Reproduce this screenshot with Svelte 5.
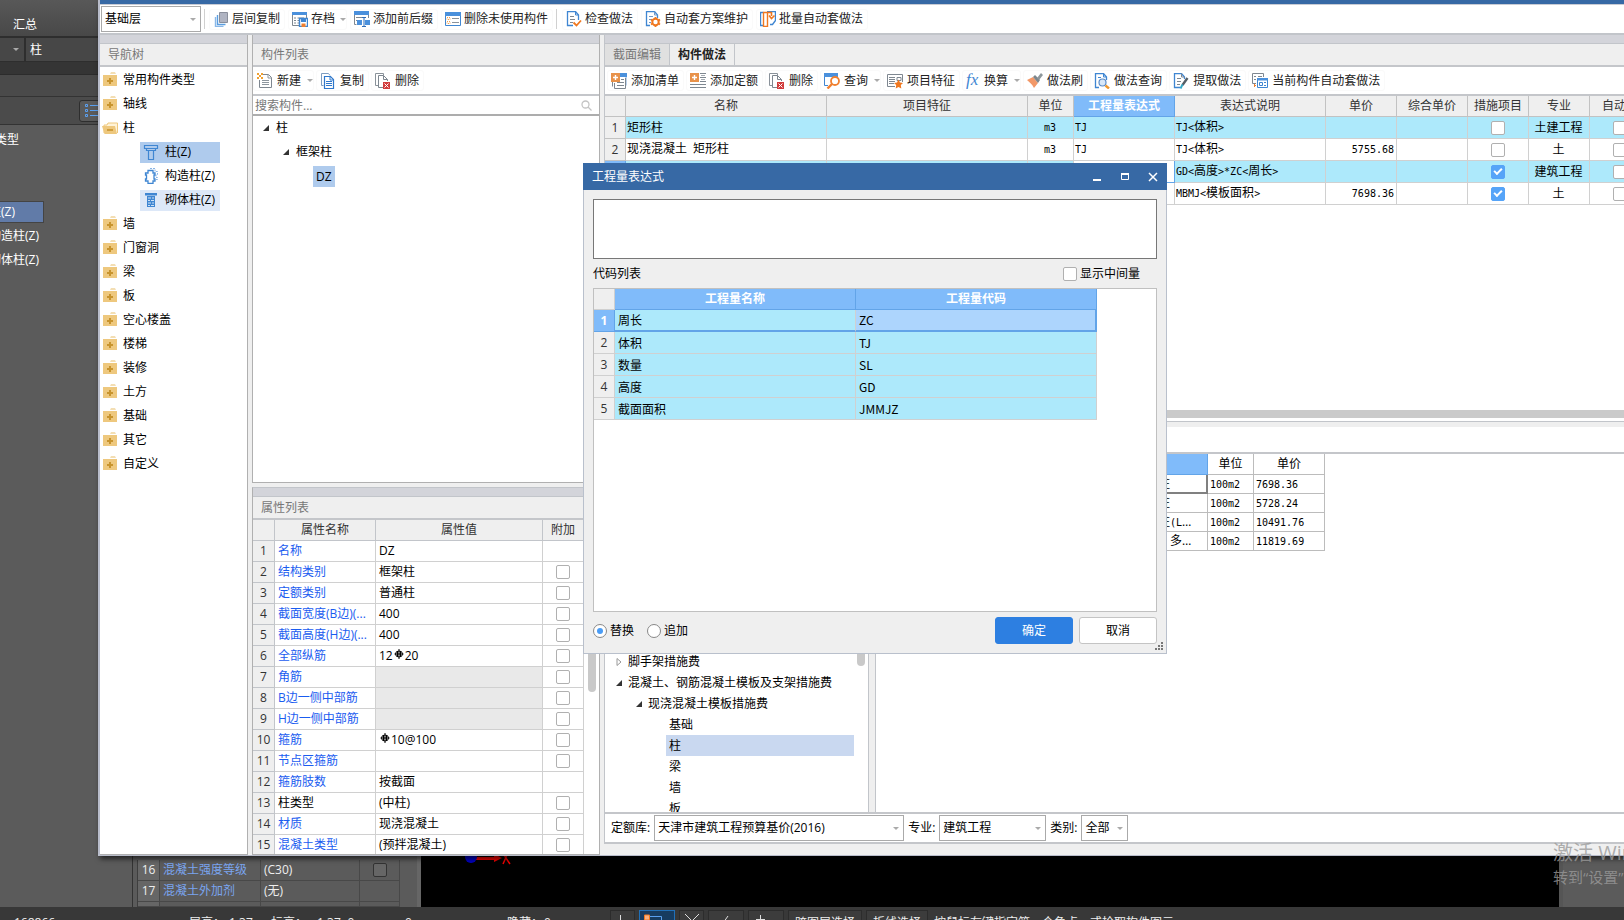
<script lang="ts">
	type Tool = { icon: string; label: string; menu?: boolean; sep?: boolean };

	const mainTools: Tool[] = [
		{ icon: 'layers', label: '层间复制' },
		{ icon: 'archive', label: '存档', menu: true },
		{ icon: 'affix', label: '添加前后缀' },
		{ icon: 'unused', label: '删除未使用构件', sep: true },
		{ icon: 'check', label: '检查做法' },
		{ icon: 'gear', label: '自动套方案维护' },
		{ icon: 'batch', label: '批量自动套做法' },
	];

	const listTools: Tool[] = [
		{ icon: 'new', label: '新建', menu: true },
		{ icon: 'copy', label: '复制' },
		{ icon: 'delete', label: '删除' },
	];

	const methodTools: Tool[] = [
		{ icon: 'addlist', label: '添加清单' },
		{ icon: 'addquota', label: '添加定额' },
		{ icon: 'delete', label: '删除' },
		{ icon: 'query', label: '查询', menu: true },
		{ icon: 'feature', label: '项目特征' },
		{ icon: 'fx', label: '换算', menu: true },
		{ icon: 'brush', label: '做法刷' },
		{ icon: 'search', label: '做法查询' },
		{ icon: 'extract', label: '提取做法' },
		{ icon: 'auto', label: '当前构件自动套做法' },
	];

	const columnTypes = [
		{ icon: 'column', label: '柱(Z)', state: 'selected' },
		{ icon: 'tie', label: '构造柱(Z)', state: '' },
		{ icon: 'masonry', label: '砌体柱(Z)', state: 'hover' },
	];
	const navTop = ['常用构件类型', '轴线'];
	const navRest = ['墙', '门窗洞', '梁', '板', '空心楼盖', '楼梯', '装修', '土方', '基础', '其它', '自定义'];

	const props = [
		{ name: '名称', value: 'DZ', box: false },
		{ name: '结构类别', value: '框架柱' },
		{ name: '定额类别', value: '普通柱' },
		{ name: '截面宽度(B边)(...', value: '400' },
		{ name: '截面高度(H边)(...', value: '400' },
		{ name: '全部纵筋', value: '12', bar: '20' },
		{ name: '角筋', value: '', off: true },
		{ name: 'B边一侧中部筋', value: '', off: true },
		{ name: 'H边一侧中部筋', value: '', off: true },
		{ name: '箍筋', value: '', bar: '10@100' },
		{ name: '节点区箍筋', value: '' },
		{ name: '箍筋肢数', value: '按截面', box: false },
		{ name: '柱类型', value: '(中柱)', plain: true },
		{ name: '材质', value: '现浇混凝土' },
		{ name: '混凝土类型', value: '(预拌混凝土)' },
	];

	const methodHead = ['名称', '项目特征', '单位', '工程量表达式', '表达式说明', '单价', '综合单价', '措施项目', '专业', '自动套'];
	const methodWidths = [201, 201, 46, 101, 151, 71, 71, 61, 61, 61];
	const methodRows = [
		{ no: '1', name: '矩形柱', unit: 'm3', expr: 'TJ', note: 'TJ<体积>', price: '', measure: false, major: '土建工程' },
		{ no: '2', name: '现浇混凝土 矩形柱', unit: 'm3', expr: 'TJ', note: 'TJ<体积>', price: '5755.68', measure: false, major: '土' },
		{ no: '', name: '', unit: '', expr: '', note: 'GD<高度>*ZC<周长>', price: '', measure: true, major: '建筑工程', current: true },
		{ no: '', name: '', unit: '', expr: '', note: 'MBMJ<模板面积>', price: '7698.36', measure: true, major: '土' },
	];

	const quotaRows = [
		{ name: '柱', price: '7698.36' },
		{ name: '柱', price: '5728.24' },
		{ name: '柱(L…', price: '10491.76' },
		{ name: '  多…', price: '11819.69' },
	];

	const quotaTree = [
		{ label: '脚手架措施费', level: 0, arrow: 'closed' },
		{ label: '混凝土、钢筋混凝土模板及支架措施费', level: 0, arrow: 'open' },
		{ label: '现浇混凝土模板措施费', level: 1, arrow: 'open' },
		{ label: '基础', level: 2 },
		{ label: '柱', level: 2, selected: true },
		{ label: '梁', level: 2 },
		{ label: '墙', level: 2 },
		{ label: '板', level: 2 },
	];

	const codes = [
		['周长', 'ZC'],
		['体积', 'TJ'],
		['数量', 'SL'],
		['高度', 'GD'],
		['截面面积', 'JMMJZ'],
	];

	let mode = $state('replace');
	let expression = $state('');
	let showMiddle = $state(false);

	/** Split into half-width and full-width runs so that each gets its own font. */
	function runs(text: string) {
		return (text.match(/[\x20-\x7e]+|[^\x20-\x7e]+/g) ?? []).map((t) => ({
			text: t,
			half: t.charCodeAt(0) < 128,
		}));
	}
</script>

{#snippet icon(name: string)}
	<svg class="icon" class:narrow={name === 'fx'} viewBox={name === 'fx' ? '0 0 14 16' : '0 0 16 16'} fill="none" aria-hidden="true">
		{#if name === 'layers'}
			<path d="M2.5 6v9.5h8" stroke="#8ab8e8" stroke-width="1.4" /><path d="M4.5 4v9.5h8" stroke="#5b9ee0" stroke-width="1.4" />
			<path d="M6.500 1.500h8v10h-8z" fill="#b0b4c2" stroke="#8a8f9c" />
		{:else if name === 'archive'}
			<path d="M0 1h15v3H0z" fill="#4a90dc" /><path d="M.5 4v10.5h7M14.5 4v3" stroke="#7e8790" />
			<path d="M2 7h2M2 9.5h2M2 12h2M5.5 7H12M5.5 9.5H7M5.5 12H7" stroke="#7e8790" />
			<path d="M7.5 7.5h8v8h-8z" fill="#fff" stroke="#3f86d2" stroke-width="1.4" /><path d="M9 8h5v3H9z" fill="#3f86d2" /><path d="M9.5 12.5h4V16h-4z" fill="#f08030" />
		{:else if name === 'affix'}
			<path d="M0 0h15v4H0z" fill="#4a90dc" /><path d="M.5 4v9.5h2M14.5 4v3" stroke="#7e8790" /><path d="M2 6.5h6M2 9.5h1" stroke="#7e8790" />
			<path d="M3 9h5v5H3zM11 9h5v5h-5z" fill="#4a90dc" /><path d="M8 6.5h4M8 15.5h4M10 6.5v9" stroke="#2d6cb8" />
		{:else if name === 'unused'}
			<path d="M.5 1.5h15v13H.5z" stroke="#3f86d2" /><path d="M0 1h16v4H0z" fill="#4a90dc" />
			<path d="M2 6.5h3v2H2zM2 10.5h3v2H2z" stroke="#f0a050" stroke-dasharray="1 1" /><path d="M7 7.5h7M7 11.5h7" stroke="#8a929a" />
		{:else if name === 'check'}
			<path d="M7 14.5H1.5V.5h8l3 3.5v5" stroke="#3f86d2" stroke-width="1.3" /><path d="M9.5.5V4h3" stroke="#3f86d2" /><path d="M4 5.5h4M4 8.5h5M4 11.5h3" stroke="#7e8790" />
			<path d="M7.5 11.5l3 3 4.5-5" stroke="#f07820" stroke-width="1.8" />
		{:else if name === 'gear'}
			<path d="M5 14.5H1.5V.5h8l3 3.5v3" stroke="#3f86d2" stroke-width="1.3" /><path d="M9.5.5V4h3M4 5.5h4M4 8.5h3M4 11.5h2" stroke="#6f98c8" />
			<circle cx="10.5" cy="11" r="3.2" stroke="#f07820" stroke-width="2" /><path d="M10.500 6v2M10.500 14v2M6 8.500l1.500 1M13.500 12.500l1.500 1M6 13.500l1.500-1M13.500 9.500l1.500-1" stroke="#f07820" stroke-width="1.8" />
		{:else if name === 'batch'}
			<path d="M3.5 14.5h-3v-13h3M7 .5h8.5v9l-3 4H10" stroke="#3f86d2" stroke-width="1.4" /><path d="M3.5 1.5h4v14h-4z" fill="#fff" stroke="#f07820" stroke-width="1.4" />
			<path d="M7 1.500h4.500V5M9 4.500l2.500 3 3-3" stroke="#f07820" stroke-width="1.6" />
		{:else if name === 'new'}
			<path d="M6 1.5h5.5l3 3v10h-12V7" stroke="#7e8790" /><path d="M11 1.5V5h3.5M5 7.5h7M5 9.5h7M5 11.5h7" stroke="#8d969e" />
			<path d="M0 0h2v2H0zM4 0h2v2H4zM2 2h2v2H2zM0 4h2v2H0zM4 4h2v2H4z" fill="#f0a030" />
		{:else if name === 'copy'}
			<path d="M3.5 12.5h-2V.5h7l1.5 2" stroke="#7e9dc0" /><path d="M4.5 3.5h6l3 3v9h-9z" fill="#fff" stroke="#2f78cc" stroke-width="1.2" /><path d="M10 3.5V7h3M6 8.5h6M6 10.5h6M6 12.5h6" stroke="#2f78cc" />
		{:else if name === 'delete'}
			<path d="M3 12.5H.5V.5h8v2" stroke="#8a929a" /><path d="M8 14.5H3.5v-12h5l4 4V8" fill="#fff" stroke="#7e8790" /><path d="M8.5 2.5v4h4" stroke="#7e8790" />
			<path d="M8 9h7v7H8z" fill="#d23c3c" /><path d="M9.5 10.5l4 4M13.5 10.5l-4 4" stroke="#fff" />
		{:else if name === 'addlist'}
			<path d="M9 1.5h6v11" stroke="#7aa8de" /><path d="M8 0h8v4H8z" fill="#4a90dc" /><path d="M3.5 10v5.5h11V5M1.5 9v4.5" stroke="#7e8790" /><path d="M10 6.5h3M6 9.5h7M6 12.5h7" stroke="#7e8790" />
			<path d="M0 0h9v9H0z" fill="#e8924a" /><path d="M4.5 2v5M2 4.5h5" stroke="#fff" stroke-width="1.4" />
		{:else if name === 'addquota'}
			<path d="M10 .5h6M10 4.5h6M10 8.5h6M0 11.5h16M0 14.5h16" stroke="#7e8790" /><path d="M11 2.5h4M11 6.5h4" stroke="#a4abb2" />
			<path d="M0 0h9v9H0z" fill="#e8924a" /><path d="M4.5 2v5M2 4.5h5" stroke="#fff" stroke-width="1.4" />
		{:else if name === 'query'}
			<path d="M.5 3v9.5H4" stroke="#3f86d2" /><path d="M0 0h14v4H0z" fill="#4a90dc" /><circle cx="11" cy="8" r="4" fill="#fff" stroke="#f08030" stroke-width="1.8" /><path d="M8 11l-4.5 4.5" stroke="#f08030" stroke-width="2.4" />
		{:else if name === 'feature'}
			<path d="M8 13.5H.5v-12h15V9" stroke="#7e8790" /><path d="M2 4.5h6M2 6.5h6M2 8.5h6M2 10.5h5M10 4.5h4v3h-4z" stroke="#7e8790" />
			<path d="M11.5 6.5l1.500 3 3 .4-2.200 2.100.5 3.500-2.800-1.600L8.700 15.500l.5-3.500L7 9.900l3-.4z" fill="#f07820" />
		{:else if name === 'fx'}
			<text x="0" y="12" font-family="Liberation Serif, serif" font-style="italic" font-size="17" fill="#3f86d2">fx</text>
		{:else if name === 'brush'}
			<path d="M0 7l6-3 5 6-4 5C5 11 2 9 0 7z" fill="#f29868" /><path d="M6 4l2-2 5 5-2 3z" fill="#7d868c" /><path d="M10 5l4-5 2 2-4 5z" fill="#8e979c" />
		{:else if name === 'search'}
			<path d="M5 14.5H1.5V.5h8l3 3.5v3" stroke="#3f86d2" stroke-width="1.3" /><path d="M9.5.5V4h3M4 4.5h3" stroke="#3f86d2" /><circle cx="8.5" cy="9.5" r="3.5" fill="#d8e8f8" stroke="#5b8cc8" stroke-width="1.2" /><path d="M11.5 12.5L15 15.5" stroke="#f0982c" stroke-width="2.4" />
		{:else if name === 'extract'}
			<path d="M7 14.5H1.5V.5h7l3 3.5v2" stroke="#3f86d2" stroke-width="1.3" /><path d="M8.5.5V4h3M4 5.5h4M4 8.5h4M4 11.5h3" stroke="#7e8790" /><path d="M14.5 5l-5 7" stroke="#555e66" stroke-width="2.4" /><path d="M9.5 11.5l-2 4" stroke="#32a8c8" stroke-width="2" />
		{:else if name === 'auto'}
			<path d="M4 10.5H.5V.5h11V4" stroke="#7e8790" /><path d="M2 3.5h2M6 3.5h4M2 6.5h2" stroke="#7e8790" /><path d="M2 12.5h2M2.5 11v3" stroke="#f08030" /><path d="M5.5 5.5h10v9h-10z" fill="#fff" stroke="#3f86d2" /><path d="M5 5h11v2.5H5z" fill="#4a90dc" /><path d="M7.500 9.500h3v3h-3zM12 9.500h2M12 12.500h2" stroke="#3f86d2" />
		{:else if name === 'folder'}
			<path d="M8 1.500l1-1h4l1 1z" fill="#e8bd68" /><path d="M1 3h14v11H1z" fill="#eec87e" /><path d="M8 6v6M5 9h6" stroke="#c8942e" stroke-width="2" />
		{:else if name === 'opened'}
			<path d="M2 13V5h3l1-2h9.500v10" fill="#fff3d8" stroke="#eec87e" /><path d="M0 6h13l2 8H2.500z" fill="#eec87e" /><path d="M5 10h6" stroke="#c8942e" stroke-width="1.6" />
		{:else if name === 'column'}
			<path d="M1.5 1.5h13v3h-13zM3.5 4.5h9v2h-9zM5.5 6.5h5v9h-5z" stroke="#3f86d2" stroke-width="1.2" />
		{:else if name === 'tie'}
			<path d="M7 .5h5v3h2.5v3H13v3h1.500v2H12" stroke="#8ab4e4" stroke-dasharray="2 1" />
			<path d="M5 2.500h5v2.500h2v2h-1v4h1v2h-2v2.500H5V13H2.500v-2h1V7h-1V5H5z" fill="#fff" stroke="#3f86d2" stroke-width="1.3" />
		{:else if name === 'masonry'}
			<path d="M2 1h12v2.5H2z" fill="#3f86d2" /><path d="M4 4h8v11H4z" fill="#3f86d2" /><path d="M5 6h3M9 6h2M5 8.5h2M8 8.5h3M5 11h3M9 11h2M5 13.5h2M8 13.5h3" stroke="#cfe2f6" />
		{/if}
	</svg>
{/snippet}

{#snippet toolbar(tools: Tool[], roomy: boolean)}
	{#each tools as tool}
		<button type="button" class="tool" class:roomy class:menu={tool.menu}>
			{@render icon(tool.icon)}
			<span>{tool.label}</span>
			{#if tool.menu}<i class="caret"></i>{/if}
		</button>
		{#if tool.sep}<i class="sep"></i>{/if}
	{/each}
{/snippet}

{#snippet song(text: string)}{#each runs(text) as run}<span class:half={run.half}>{run.text}</span>{/each}{/snippet}

{#snippet arrow(kind: string)}
	<svg class="arrow" viewBox="0 0 8 8" aria-hidden="true">
		{#if kind === 'open'}
			<path d="M7 1v6H1z" fill="#333" />
		{:else}
			<path d="M2 .5l4 3.5-4 3.5z" fill="#fff" stroke="#999" />
		{/if}
	</svg>
{/snippet}

<div class="desktop">
	<div class="host">
		<aside class="host-left">
			<div class="ribbon">汇总</div>
			<div class="host-pick"><span class="pick-arrow"><i class="caret"></i></span><span class="pick-text">柱</span></div>
			<div class="host-band"></div>
			<div class="host-title"></div>
			<div class="host-tools">
				<button type="button" class="list-button" aria-label="类型">
					<svg width="14" height="14" viewBox="0 0 14 14" fill="none" stroke="#5aa0f0"><path d="M.5.5h2v2h-2zM.5 5.5h2v2h-2zM.5 10.5h2v2h-2zM5 1.5h9M5 6.5h9M5 11.5h9" /></svg>
				</button>
			</div>
			<div class="host-tree">
				<p class="group">类型</p>
				<ul>
					<li class="active">柱(Z)</li>
					<li>构造柱(Z)</li>
					<li>砌体柱(Z)</li>
				</ul>
			</div>
		</aside>
		<section class="host-props">
			<table>
				<tbody>
					<tr><th>16</th><td class="key">混凝土强度等级</td><td class="val">(C30)</td><td class="flag"><input type="checkbox" class="dark" aria-label="混凝土强度等级" /></td></tr>
					<tr><th>17</th><td class="key">混凝土外加剂</td><td class="val">(无)</td><td class="flag"></td></tr>
					<tr class="stub"><th></th><td></td><td></td><td></td></tr>
				</tbody>
			</table>
		</section>
		<section class="canvas">
			<svg class="gizmo" width="44" height="18" viewBox="0 0 44 18" aria-hidden="true">
				<path d="M10 8h20v-3l8 4-8 4v-2H10z" fill="#e00" /><circle cx="7" cy="8" r="6" fill="#0000c0" />
				<path d="M39 15l4-9M40 6l6 9" stroke="#e00" stroke-width="1.5" />
			</svg>
		</section>
		<aside class="host-right"></aside>
	</div>
	<footer class="status">
		<span class="s-id">168866</span>
		<span class="s-item">层高：</span><span class="s-num">1.37</span>
		<span class="s-item">标高：</span><span class="s-range">1.37~0</span>
		<span class="s-count">0</span>
		<span class="s-item hidden-count">隐藏：</span><span class="s-zero">0</span>
		<button type="button" class="s-btn" aria-label="正交"><svg width="14" height="14" stroke="#ddd" fill="none"><path d="M4.5 1v10h8" /></svg></button>
		<button type="button" class="s-btn wide on" aria-label="捕捉"><svg width="28" height="14" fill="none"><path d="M5.5 2.5h13v10h-13z" stroke="#5aa0f0" /><path d="M1.5 1h5v5h-5z" fill="#f8b080" stroke="#f07820" /></svg></button>
		<button type="button" class="s-btn" aria-label="交点"><svg width="16" height="14" stroke="#ddd" fill="none"><path d="M1 0l14 14M15 0L1 14" /></svg></button>
		<button type="button" class="s-btn wide" aria-label="垂点"><svg width="14" height="14" stroke="#ddd" fill="none"><path d="M9 2L2 12" /></svg></button>
		<button type="button" class="s-btn wide" aria-label="中点"><svg width="28" height="14" stroke="#ddd" fill="none"><path d="M8.5 1v12M4 5.5h9" /></svg></button>
		<button type="button" class="s-btn text">跨图层选择</button>
		<button type="button" class="s-btn text">折线选择</button>
		<span class="s-tip">按鼠标左键指定第一个角点，或拾取构件图元</span>
	</footer>

	<main class="window">
		<div class="title-edge"></div>
		<nav class="main-bar">
			<label class="pick floor"><select aria-label="基础层"><option>基础层</option></select></label>
			<i class="sep"></i>
			{@render toolbar(mainTools, false)}
		</nav>

		<div class="docks">
			<section class="dock nav-dock">
				<div class="grip"></div>
				<h2>导航树</h2>
				<ul class="nav-tree">
					{#each navTop as label}
						<li>{@render icon('folder')}<span>{label}</span></li>
					{/each}
					<li>{@render icon('opened')}<span>柱</span></li>
					{#each columnTypes as type}
						<li class="child"><span class="chip {type.state}">{@render icon(type.icon)}<span>{type.label}</span></span></li>
					{/each}
					{#each navRest as label}
						<li>{@render icon('folder')}<span>{label}</span></li>
					{/each}
				</ul>
			</section>

			<div class="middle">
				<section class="dock list-dock">
					<div class="grip"></div>
					<h2>构件列表</h2>
					<div class="bar">{@render toolbar(listTools, true)}</div>
					<label class="search">
						<input type="text" placeholder="搜索构件..." aria-label="搜索构件" />
						<svg width="11" height="11" viewBox="0 0 11 11" fill="none" stroke="#c4c4c4" stroke-width="1.3"><circle cx="4.5" cy="4.5" r="3.5" /><path d="M7 7l3.5 3.5" /></svg>
					</label>
					<ul class="part-tree">
						<li>{@render arrow('open')}<span>柱</span></li>
						<li class="lv1">{@render arrow('open')}<span>框架柱</span></li>
						<li class="lv2"><span class="picked">DZ</span></li>
					</ul>
				</section>

				<section class="dock prop-dock">
					<div class="grip"></div>
					<h2>属性列表</h2>
					<div class="prop-body">
						<table class="prop-table">
							<thead>
								<tr><th class="no"></th><th class="name">属性名称</th><th>属性值</th><th class="extra">附加</th></tr>
							</thead>
							<tbody>
								{#each props as row, i}
									<tr>
										<th class="no">{i + 1}</th>
										<td class:link={!row.plain}>{row.name}</td>
										<td class:off={row.off}>{row.value}{#if row.bar}<svg class="rebar" viewBox="0 0 10 11" fill="none" stroke="#000"><ellipse cx="5" cy="5" rx="3.5" ry="3" /><path d="M3.5 2v6M6.5 2v6M5 0v10M.5 5h9" /></svg>{row.bar}{/if}</td>
										<td class="center">{#if row.box !== false}<input type="checkbox" aria-label={row.name} />{/if}</td>
									</tr>
								{/each}
							</tbody>
						</table>
						<div class="gutter"><i class="thumb"></i></div>
					</div>
				</section>
			</div>

			<div class="work">
				<div class="grip"></div>
				<div class="tabs" role="tablist">
					<button type="button" role="tab" aria-selected="false">截面编辑</button>
					<button type="button" role="tab" aria-selected="true" class="current">构件做法</button>
				</div>
				<div class="bar">{@render toolbar(methodTools, true)}</div>
				<div class="method-area">
					<table class="method">
						<colgroup>
							<col style:width="21px" />
							{#each methodWidths as w}<col style:width="{w}px" />{/each}
						</colgroup>
						<thead>
							<tr>
								<th></th>
								{#each methodHead as head}<th class:current={head === '工程量表达式'}>{head}</th>{/each}
							</tr>
						</thead>
						<tbody>
							{#each methodRows as row, i}
								<tr class:tinted={i % 2 === 0}>
									<th class:current={row.current}>{row.no}</th>
									<td>{@render song(row.name)}</td>
									<td></td>
									<td class="center">{@render song(row.unit)}</td>
									<td class:editing={row.current}>{@render song(row.expr)}</td>
									<td>{@render song(row.note)}</td>
									<td class="right">{@render song(row.price)}</td>
									<td></td>
									<td class="center"><input type="checkbox" checked={row.measure} aria-label="措施项目" /></td>
									<td class="center">{row.major}</td>
									<td class="center"><input type="checkbox" aria-label="自动套" /></td>
								</tr>
							{/each}
						</tbody>
					</table>
					<div class="hscroll"></div>
				</div>

				<div class="query">
					<div class="query-tabs"></div>
					<div class="query-body">
						<ul class="quota-tree">
							{#each quotaTree as node}
								<li class="q{node.level}">
									{#if node.arrow}{@render arrow(node.arrow)}{/if}
									<span class="label" class:selected={node.selected}>{node.label}</span>
								</li>
							{/each}
							<li class="track" aria-hidden="true"></li>
						</ul>
						<div class="quota-area">
							<table class="quota">
								<thead>
									<tr><th class="lead current"></th><th class="title current"></th><th class="unit">单位</th><th class="price">单价</th></tr>
								</thead>
								<tbody>
									{#each quotaRows as row, i}
										<tr><td></td><td class="title" class:focus={i === 0}>{@render song(row.name)}</td><td>{@render song('100m2')}</td><td>{@render song(row.price)}</td></tr>
									{/each}
								</tbody>
							</table>
						</div>
					</div>
					<div class="filters">
						<label for="lib">定额库:</label><span class="pick lib"><select id="lib"><option>天津市建筑工程预算基价(2016)</option></select></span>
						<label for="major">专业:</label><span class="pick major"><select id="major"><option>建筑工程</option></select></span>
						<label for="kind">类别:</label><span class="pick kind"><select id="kind"><option>全部</option></select></span>
					</div>
				</div>
			</div>
		</div>
	</main>

	<div class="dialog" role="dialog" aria-labelledby="dialog-title">
		<header>
			<h1 id="dialog-title">工程量表达式</h1>
			<button type="button" aria-label="最小化"><svg width="10" height="10"><path d="M1 7h8v2H1z" fill="#fff" /></svg></button>
			<button type="button" aria-label="最大化"><svg width="10" height="10" fill="none" stroke="#fff"><path d="M1.5 2.5h7v5h-7z" /><path d="M1 2h8" stroke-width="2" /></svg></button>
			<button type="button" aria-label="关闭"><svg width="10" height="10" fill="none" stroke="#fff" stroke-width="1.5"><path d="M1 1l8 8M9 1L1 9" /></svg></button>
		</header>
		<div class="dialog-body">
			<textarea bind:value={expression} aria-labelledby="dialog-title"></textarea>
			<div class="caption">
				<span>代码列表</span>
				<label><input type="checkbox" bind:checked={showMiddle} />显示中间量</label>
			</div>
			<div class="code-box">
				<table class="codes">
					<thead><tr><th class="corner"></th><th>工程量名称</th><th>工程量代码</th></tr></thead>
					<tbody>
						{#each codes as [name, code], i}
							<tr class:active={i === 0}><th>{i + 1}</th><td>{name}</td><td>{code}</td></tr>
						{/each}
					</tbody>
				</table>
			</div>
			<div class="actions">
				<label><input type="radio" name="mode" value="replace" bind:group={mode} />替换</label>
				<label><input type="radio" name="mode" value="append" bind:group={mode} />追加</label>
				<span class="fill"></span>
				<button type="button" class="primary">确定</button>
				<button type="button">取消</button>
			</div>
		</div>
		<svg class="resize" width="9" height="9" fill="#777" aria-hidden="true"><path d="M6 0h2v2H6zM3 3h2v2H3zM6 3h2v2H6zM0 6h2v2H0zM3 6h2v2H3zM6 6h2v2H6z" /></svg>
	</div>

	<div class="watermark"><p>激活 Win</p><p class="small">转到“设置”</p></div>
</div>

<style>
	:global(body) {
		margin: 0;
		overflow: hidden;
	}

	.desktop {
		position: relative;
		display: flex;
		flex-direction: column;
		height: 100vh;
		overflow: hidden;
		background: #363636;
		color: #000;
		font: 12px/16px 'Open Sans', 'Noto Sans CJK SC', sans-serif;
	}

	.desktop *,
	.desktop *::before,
	.desktop *::after {
		box-sizing: border-box;
	}

	ul,
	p,
	h1,
	h2 {
		margin: 0;
		padding: 0;
		list-style: none;
		font-size: 12px;
		font-weight: normal;
	}

	button,
	input,
	select,
	textarea {
		margin: 0;
		font: inherit;
		color: inherit;
	}

	table {
		border-spacing: 0;
		table-layout: fixed;
	}

	th,
	td {
		padding: 0;
		font-weight: normal;
		text-align: left;
		white-space: nowrap;
		overflow: hidden;
	}

	/* ---- form controls ---- */
	input[type='checkbox'],
	input[type='radio'] {
		appearance: none;
		display: block;
		flex: none;
		width: 14px;
		height: 14px;
		border: 1px solid #b0b0b0;
		border-radius: 2px;
		background: #fff;
	}

	input[type='checkbox']:checked {
		border-color: #56a4f8;
		background: #56a4f8;
	}

	input[type='checkbox']:checked::after {
		content: '';
		display: block;
		width: 8px;
		height: 5px;
		margin: 2px;
		border: solid #fff;
		border-width: 0 0 2px 2px;
		transform: rotate(-45deg);
	}

	input[type='radio'] {
		border-color: #888;
		border-radius: 50%;
	}

	input[type='radio']:checked::after {
		content: '';
		display: block;
		width: 6px;
		height: 6px;
		margin: 3px;
		border-radius: 50%;
		background: #4a9cf5;
	}

	input[type='checkbox'].dark {
		background: #666;
		border-color: #333;
	}

	.pick {
		position: relative;
		display: block;
		height: 26px;
	}

	.pick select {
		appearance: none;
		display: block;
		width: 100%;
		height: 100%;
		padding: 0 3px;
		border: 1px solid #aaa;
		border-radius: 0;
		background: #fff;
	}

	.pick::after {
		content: '';
		position: absolute;
		right: 5px;
		top: 12px;
		border: 3px solid transparent;
		border-top: 3px solid #aaa;
		border-bottom: 0;
		pointer-events: none;
	}

	.caret {
		width: 6px;
		border: 3px solid transparent;
		border-top: 3px solid #aaa;
		border-bottom: 0;
	}

	.sep {
		width: 1px;
		height: 20px;
		background: #d0d0d0;
	}

	.icon {
		flex: none;
		width: 16px;
		height: 16px;
	}

	.icon.narrow {
		width: 14px;
	}

	.tool {
		display: flex;
		flex: none;
		align-items: center;
		gap: 3px;
		height: 21px;
		padding: 0 4px 0 3px;
		border: 1px solid #fafafa;
		border-radius: 3px;
		background: #fff;
		color: #222;
		white-space: nowrap;
	}

	.tool.roomy {
		gap: 4px;
	}

	.tool.menu {
		padding-right: 0;
	}

	.tool .caret {
		margin-left: 2px;
	}

	/* ---- host application behind ---- */
	.host {
		display: flex;
		flex: 1;
		min-height: 0;
	}

	.host-left {
		width: 133px;
		border-right: 1px solid #333;
		background: #5b5b5b;
		color: #fff;
	}

	.ribbon {
		height: 38px;
		padding: 17px 0 0 13px;
		border-bottom: 2px solid #2e2e2e;
		background: linear-gradient(#585858, #484848);
	}

	.host-pick {
		display: flex;
		align-items: center;
		height: 24px;
		border-bottom: 1px solid #2e2e2e;
		background: #474747;
	}

	.pick-arrow {
		display: flex;
		align-items: center;
		justify-content: flex-end;
		width: 26px;
		height: 23px;
		padding-right: 5px;
		border-right: 2px solid #2e2e2e;
	}

	.pick-text {
		padding-left: 4px;
	}

	.host-band {
		height: 13px;
		background: #353535;
		border-bottom: 1px solid #2c2c2c;
	}

	.host-title {
		height: 22px;
		border-bottom: 1px solid #333;
		background: #4a4a4a;
	}

	.host-tools {
		height: 28px;
		padding: 3px 0 0 79px;
		border-bottom: 1px solid #333;
		background: #4b4b4b;
	}

	.list-button {
		display: flex;
		align-items: center;
		width: 30px;
		height: 22px;
		padding: 0 5px;
		border: 1px solid #2e2e2e;
		border-radius: 3px;
		background: #5a5a5a;
	}

	.host-tree .group {
		margin: 7px 0 53px -5px;
		line-height: 16px;
	}

	.host-tree li {
		height: 24px;
		margin-left: -11px;
		line-height: 22px;
	}

	.host-tree .active {
		width: 55px;
		height: 22px;
		margin-bottom: 2px;
		border: solid #444;
		border-width: 1px 1px 1px 0;
		background: #617ba8;
		line-height: 19px;
	}

	.host-props {
		display: flex;
		flex-direction: column;
		justify-content: flex-end;
		width: 288px;
		padding: 0 10px 0 4px;
		border-right: 4px solid #666;
		background: #5b5b5b;
		color: #eee;
	}

	.host-props table {
		width: 263px;
		border-left: 1px solid #3e3e3e;
	}

	.host-props th,
	.host-props td {
		height: 21px;
		border: solid #484848;
		border-width: 0 1px 1px 0;
		line-height: 16px;
	}

	.host-props th {
		width: 22px;
		text-align: center;
		background: #666;
	}

	.host-props .key {
		width: 101px;
		padding-left: 3px;
		color: #7aa5f0;
	}

	.host-props .val {
		width: 99px;
		padding-left: 3px;
	}

	.host-props .flag {
		padding-left: 13px;
	}

	.host-props .stub th,
	.host-props .stub td {
		height: 5px;
	}

	.canvas {
		position: relative;
		flex: 1;
		background: #000;
	}

	.gizmo {
		position: absolute;
		left: 43px;
		bottom: 40px;
		overflow: visible;
	}

	.host-right {
		width: 65px;
		border-left: 4px solid #555;
		background: #5b5b5b;
	}

	.status {
		display: flex;
		align-items: flex-start;
		height: 13px;
		padding: 3px 0 0 14px;
		overflow: hidden;
		background: #383838;
		color: #eee;
		white-space: nowrap;
	}

	.status > span {
		flex: none;
		padding-top: 5px;
	}

	.s-id {
		width: 175px;
	}

	.s-item {
		width: 40px;
	}

	.s-num {
		width: 42px;
	}

	.s-range {
		width: 94px;
		padding-left: 6px;
	}

	.s-count {
		width: 102px;
	}

	.s-item.hidden-count {
		width: 37px;
	}

	.s-zero {
		width: 66px;
	}

	.s-btn {
		display: flex;
		flex: none;
		justify-content: center;
		width: 25px;
		height: 25px;
		margin-right: 4px;
		padding: 3px 0;
		border: 1px solid #2c2c2c;
		background: #3c3c3c;
	}

	.s-btn.wide {
		width: 36px;
	}

	.s-btn.on {
		border-color: #2070b8;
		background: #173c60;
	}

	.s-btn.text {
		width: auto;
		padding: 4px 6px;
	}

	.s-tip {
		padding-left: 2px;
	}

	/* ---- component window ---- */
	.window {
		position: absolute;
		inset: 0 0 64px 98px;
		display: flex;
		flex-direction: column;
		border: solid #b9bdcb;
		border-width: 0 0 1px 2px;
		background: #efefef;
		box-shadow: 2px 3px 5px #0009;
	}

	.title-edge {
		flex: none;
		height: 5px;
		border-bottom: 1px solid #c8cbd4;
		background: #3769a5;
	}

	.main-bar {
		display: flex;
		flex: none;
		align-items: center;
		gap: 3px;
		height: 30px;
		padding-left: 1px;
		border-bottom: 2px solid #c2c5ca;
		background: #fff;
	}

	.floor {
		width: 100px;
	}

	.main-bar > .sep {
		margin-right: 1px;
	}

	.main-bar > .tool + .sep {
		margin-right: 2px;
	}

	.docks {
		display: flex;
		flex: 1;
		min-height: 0;
		gap: 4px;
	}

	.dock {
		display: flex;
		flex-direction: column;
		border: solid #b0b0b0;
		border-width: 0 1px 1px 0;
		background: #fff;
	}

	.grip {
		flex: none;
		height: 9px;
		border-bottom: 1px solid #c2c5ca;
		background: #d3d4da;
	}

	h2 {
		flex: none;
		height: 23px;
		padding: 2px 8px;
		border-bottom: 2px solid #c4c6ca;
		background: #efefef;
		color: #777;
		line-height: 18px;
	}

	.nav-dock {
		width: 148px;
	}

	.nav-tree {
		padding-top: 1px;
	}

	.nav-tree li {
		display: flex;
		align-items: center;
		gap: 5px;
		height: 24px;
		padding-left: 2px;
	}

	.nav-tree .child {
		padding-left: 40px;
	}

	.chip {
		display: flex;
		align-items: center;
		gap: 6px;
		width: 80px;
		height: 21px;
		padding-left: 3px;
		white-space: nowrap;
	}

	.chip.selected {
		background: #afcbed;
	}

	.chip.hover {
		background: #dde8f8;
	}

	.middle {
		display: flex;
		flex-direction: column;
		gap: 4px;
		width: 348px;
	}

	.list-dock {
		flex: 1;
		min-height: 0;
		border-left-width: 1px;
	}

	.bar {
		display: flex;
		flex: none;
		align-items: center;
		gap: 2px;
		height: 29px;
		border-bottom: 2px solid #c4c6ca;
		background: #fff;
	}

	.search {
		display: flex;
		flex: none;
		align-items: center;
		height: 20px;
		padding-right: 7px;
		border-bottom: 2px solid #adadad;
	}

	.search input {
		flex: 1;
		min-width: 0;
		height: 18px;
		padding: 0 2px;
		border: 0;
		outline: 0;
		background: none;
	}

	.search input::placeholder {
		color: #777;
	}

	.arrow {
		flex: none;
		width: 8px;
		height: 8px;
	}

	.part-tree li {
		display: flex;
		align-items: center;
		gap: 6px;
		height: 24px;
		padding-left: 9px;
	}

	.part-tree .lv1 {
		padding-left: 29px;
	}

	.part-tree .lv2 {
		padding-left: 60px;
	}

	.picked {
		height: 21px;
		padding: 0 3px;
		background: #afcbed;
		line-height: 21px;
	}

	.prop-dock {
		flex: none;
		border-left-width: 1px;
		border-top: 1px solid #c2c5ca;
	}

	.prop-body {
		display: flex;
		height: 334px;
		overflow: hidden;
	}

	.prop-table {
		width: 331px;
	}

	.prop-table th,
	.prop-table td {
		height: 21px;
		padding-left: 3px;
		border: solid #d0d0d0;
		border-width: 0 1px 1px 0;
	}

	.prop-table th {
		padding: 0;
		border-color: #c2c5ca;
		background: #efefef;
		color: #333;
		text-align: center;
	}

	.prop-table .no {
		width: 22px;
	}

	.prop-table .name {
		width: 101px;
	}

	.prop-table .extra {
		width: 41px;
	}

	.prop-table .link {
		color: #1a5cf0;
	}

	.prop-table .off {
		background: #e9e9e9;
	}

	.prop-table .center {
		padding-left: 13px;
	}

	.rebar {
		width: 10px;
		height: 11px;
		margin: 0 1px;
	}

	.gutter {
		display: flex;
		flex: 1;
		justify-content: center;
	}

	.thumb {
		width: 8px;
		height: 172px;
		border-radius: 4px;
		background: #c9c9c9;
	}

	.work {
		display: flex;
		flex: 1;
		flex-direction: column;
		min-width: 0;
		margin-bottom: 11px;
		border-bottom: 2px solid #c4c6ca;
		border-left: 1px solid #c2c5ca;
	}

	.tabs {
		display: flex;
		flex: none;
		height: 23px;
		border-bottom: 2px solid #c4c6ca;
	}

	.tabs button {
		width: 65px;
		padding: 0;
		border: 0;
		border-right: 1px solid #c2c5ca;
		background: #e0e0e0;
		color: #777;
	}

	.tabs .current {
		background: #efefef;
		color: #222;
		font-weight: bold;
	}

	.work .bar {
		padding-left: 2px;
	}

	.method-area {
		display: flex;
		flex: 1;
		flex-direction: column;
		justify-content: space-between;
		min-height: 0;
		overflow: hidden;
		border-bottom: 1px solid #c2c5ca;
		background: #fff;
	}

	.method {
		width: 1046px;
	}

	.method th,
	.method td {
		height: 22px;
		padding: 0 2px 0 1px;
		border: solid #d0d0d0;
		border-width: 0 1px 1px 0;
	}

	.method th {
		padding: 0;
		border-color: #c2c2c2;
		background: #efefef;
		color: #333;
		text-align: center;
	}

	.method thead th {
		height: 21px;
	}

	.method th.current,
	.quota th.current {
		border-color: #62a4e8;
		background: #80bbfa;
		color: #fff;
		font-weight: bold;
	}

	.method .tinted td {
		background: #ade9fb;
	}

	.method .tinted .editing {
		border-color: #62a4e8;
		background: #fff;
	}

	.method .center {
		text-align: center;
	}

	.method .center input {
		margin: 0 auto;
	}

	.method .right {
		text-align: right;
	}

	.half {
		font-family: 'DejaVu Sans Mono', monospace;
		font-size: 10px;
		white-space: pre;
	}

	.hscroll {
		height: 8px;
		margin-bottom: 3px;
		background: #cacaca;
	}

	.query {
		flex: none;
		padding-top: 5px;
	}

	.query-tabs {
		height: 27px;
		border-bottom: 2px solid #c4c6ca;
		background: #fff;
	}

	.query-body {
		display: flex;
		gap: 6px;
		height: 358px;
	}

	.quota-tree {
		position: relative;
		width: 264px;
		padding-top: 197px;
		overflow: hidden;
		border-right: 1px solid #c2c5ca;
		background: #fff;
	}

	.quota-tree li {
		display: flex;
		align-items: center;
		gap: 1px;
		height: 21px;
		padding-left: 10px;
	}

	.quota-tree .q1 {
		padding-left: 30px;
	}

	.quota-tree .q2 {
		padding-left: 61px;
	}

	.quota-tree .label {
		padding-left: 4px;
		line-height: 21px;
		white-space: nowrap;
	}

	.quota-tree .q2 .label {
		padding-left: 3px;
	}

	.quota-tree .selected {
		width: 188px;
		background: #c9d8f0;
	}

	.quota-tree .track {
		position: absolute;
		top: 0;
		right: 3px;
		width: 8px;
		height: 212px;
		padding: 0;
		border-radius: 4px;
		background: #c9c9c9;
	}

	.quota-area {
		flex: 1;
		min-width: 0;
		border-left: 1px solid #c2c5ca;
		background: #fff;
	}

	.quota {
		width: 449px;
	}

	.quota th,
	.quota td {
		height: 19px;
		padding: 0 2px;
		border: solid #bcbcbc;
		border-width: 0 1px 1px 0;
	}

	.quota th {
		height: 21px;
		text-align: center;
	}

	.quota .lead {
		width: 280px;
	}

	.quota .title {
		width: 52px;
	}

	.quota .focus {
		border: 2px solid #808080;
		border-top-width: 0;
		border-left-width: 0;
	}

	.quota .unit {
		width: 46px;
	}

	.quota .price {
		width: 71px;
	}

	.filters {
		display: flex;
		align-items: center;
		gap: 4px;
		height: 30px;
		padding-left: 6px;
		border-top: 2px solid #c4c6ca;
		background: #fff;
	}

	.lib {
		width: 250px;
	}

	.major {
		width: 107px;
	}

	.kind {
		width: 47px;
	}

	/* ---- expression dialog ---- */
	.dialog {
		position: absolute;
		left: 583px;
		top: 163px;
		width: 584px;
		border: 1px solid #b9c0cc;
		border-top: 0;
		background: #efefef;
	}

	.dialog header {
		display: flex;
		align-items: center;
		height: 27px;
		margin: 0 -1px;
		padding-left: 9px;
		background: #3769a5;
		color: #fff;
	}

	h1 {
		flex: 1;
	}

	header button {
		display: flex;
		align-items: center;
		justify-content: center;
		width: 28px;
		height: 27px;
		padding: 0;
		border: 0;
		background: none;
	}

	.dialog-body {
		padding: 9px;
	}

	textarea {
		display: block;
		width: 100%;
		height: 60px;
		border: 1px solid #777;
		border-radius: 0;
		background: #fff;
		resize: none;
	}

	.caption {
		display: flex;
		align-items: center;
		justify-content: space-between;
		height: 29px;
		padding-right: 17px;
	}

	.dialog label {
		display: flex;
		align-items: center;
		gap: 3px;
	}

	.code-box {
		height: 324px;
		border: 1px solid #c0c0c0;
		background: #fff;
	}

	.codes {
		width: 503px;
	}

	.codes th,
	.codes td {
		height: 22px;
		padding: 0 3px;
		border: solid #d0d0d0;
		border-width: 0 1px 1px 0;
		background: #ade9fb;
	}

	.codes td {
		font-family: 'Noto Sans CJK SC', sans-serif;
	}

	.codes tbody th {
		padding: 0;
		background: #efefef;
		color: #333;
		text-align: center;
	}

	.codes thead th {
		height: 21px;
		border-color: #62a4e8;
		background: #80bbfa;
		color: #fff;
		font-weight: bold;
		text-align: center;
	}

	.codes thead .corner {
		width: 21px;
		border-color: #d0d0d0;
		background: #efefef;
	}

	.codes .active th {
		border-color: #62a4e8;
		background: #80bbfa;
		color: #fff;
		font-weight: bold;
	}

	.codes .active td {
		border-bottom: 2px solid #62a4e8;
	}

	.codes .active td:last-child {
		border-right: 2px solid #62a4e8;
		background: #add5fd;
	}

	.actions {
		display: flex;
		gap: 13px;
		margin-top: 5px;
	}

	.fill {
		flex: 1;
	}

	.actions button {
		width: 78px;
		height: 27px;
		padding: 0;
		border: 1px solid #c4c4c4;
		border-radius: 3px;
		background: #fff;
	}

	.actions .primary {
		margin-right: -7px;
		border-color: #2d7fe1;
		background: #2d7fe1;
		color: #fff;
	}

	.resize {
		position: absolute;
		right: 2px;
		bottom: 2px;
	}

	.watermark {
		position: absolute;
		left: calc(100% - 71px);
		bottom: 32px;
		width: 71px;
		overflow: hidden;
		color: #9a9a9acc;
		white-space: nowrap;
		pointer-events: none;
	}

	.watermark p {
		font-size: 20px;
		line-height: 27px;
	}

	.watermark .small {
		font-size: 15px;
		line-height: 22px;
	}
</style>
